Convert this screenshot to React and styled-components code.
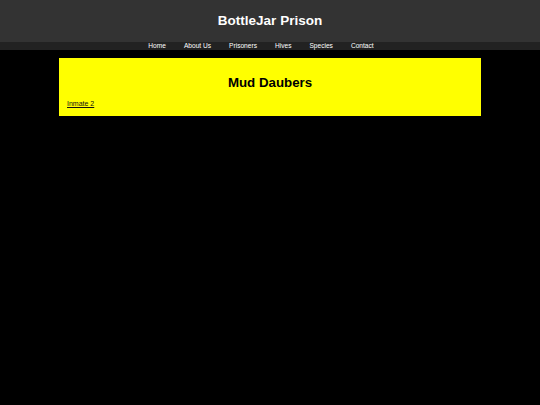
import styled, { createGlobalStyle } from "styled-components";

const GlobalStyle = createGlobalStyle`
    html, body {
        margin: 0;
        padding: 0;
        background: #000;
        font-family: "Liberation Sans", Arial, sans-serif;
    }
`;

const Header = styled.header`
    height: 42px;
    background: #333;
    display: flex;
    align-items: center;
    justify-content: center;
    padding-bottom: 2px;
    box-sizing: border-box;
`;

const SiteTitle = styled.h1`
    margin: 0;
    color: #fff;
    font-size: 13.5px;
    font-weight: bold;
`;

const Nav = styled.nav`
    height: 8px;
    background: #222;
    text-align: center;
`;

const NavList = styled.ul`
    margin: 0;
    padding: 0;
    list-style: none;
    font-size: 6.6px;
    line-height: 8px;
`;

const NavItem = styled.li`
    display: inline-block;
    margin-right: 18px;
    color: #fff;
`;

const Main = styled.main`
    width: 422px;
    margin: 8px auto 0;
    background: #ff0;
    padding: 8px;
    box-sizing: border-box;
`;

const PageTitle = styled.h2`
    margin: 9px 0 8px;
    text-align: center;
    font-size: 13.3px;
    line-height: 16px;
    color: #000;
`;

const InmateLink = styled.a`
    display: block;
    font-size: 7px;
    line-height: 9px;
    color: #111;
    text-decoration: underline;
`;

const links = ["Home", "About Us", "Prisoners", "Hives", "Species", "Contact"];

export default function App() {
    return (
        <>
            <GlobalStyle />
            <Header>
                <SiteTitle>BottleJar Prison</SiteTitle>
            </Header>
            <Nav>
                <NavList>
                    {links.map((label) => (
                        <NavItem key={label}>{label}</NavItem>
                    ))}
                </NavList>
            </Nav>
            <Main>
                <PageTitle>Mud Daubers</PageTitle>
                <InmateLink href="#">Inmate 2</InmateLink>
            </Main>
        </>
    );
}
